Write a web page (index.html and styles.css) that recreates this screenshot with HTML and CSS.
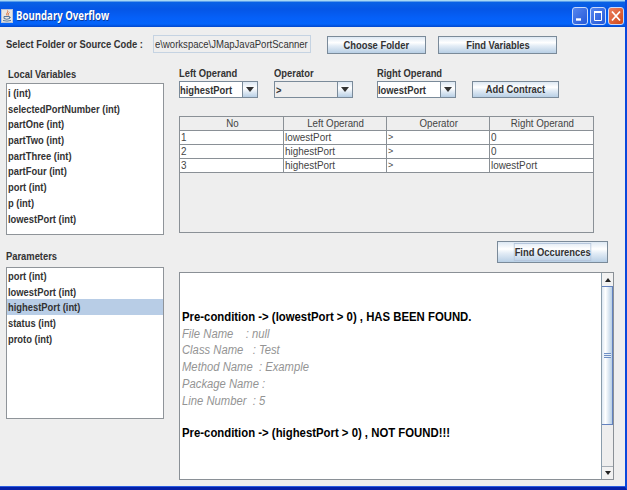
FILE: index.html
```html
<!DOCTYPE html>
<html lang="en">
<head>
    <meta charset="UTF-8">
    <title>Boundary Overflow</title>
    <link rel="stylesheet" href="styles.css">
</head>
<body>
    <div class="window">
        <div class="titlebar">
            <svg class="app-icon" width="12" height="14" viewBox="0 0 12 14">
                <rect x="0.5" y="0.5" width="11" height="13" fill="#e9e6e1" stroke="#b9c3d8"/>
                <path d="M6.5 1.5C8 3 4.5 4.5 6 6.5M8.5 3.5C7 4.5 7 5.5 7.5 6.5" fill="none" stroke="#d9703a"/>
                <path d="M3 7.5h5.5v2q-2.7 1.5-5.5 0zM8.5 8q2 0 0 1.5M2 11.5q4 1.2 8 0" fill="none" stroke="#56789d"/>
            </svg>
            <h1><span class="t">Boundary Overflow</span></h1>
            <div class="window-btns">
                <span class="win-btn"><svg width="14" height="16" viewBox="0 0 14 16"><path d="M3 11.5h5" stroke="#fff" stroke-width="2.4"/></svg></span>
                <span class="win-btn"><svg width="14" height="16" viewBox="0 0 14 16"><path d="M3.5 4h7v8.5h-7z" fill="none" stroke="#fff"/><path d="M3 4h8" stroke="#fff" stroke-width="2"/></svg></span>
                <span class="win-btn close"><svg width="14" height="16" viewBox="0 0 14 16"><path d="M3 3.5l8 9M11 3.5l-8 9" stroke="#fff" stroke-width="1.8"/></svg></span>
            </div>
        </div>

        <div class="source-row">
            <label><span class="t">Select Folder or Source Code :</span></label>
            <div class="path-field"><span class="t">e\workspace\JMapJavaPortScanner</span></div>
            <button class="btn choose-btn"><span class="t">Choose Folder</span></button>
            <button class="btn find-vars-btn"><span class="t">Find Variables</span></button>
        </div>

        <div class="main">
            <div class="sidebar">
                <h2 class="vars-title"><span class="t">Local Variables</span></h2>
                <ul class="list vars-list">
                    <li><span class="t">i (int)</span></li>
                    <li><span class="t">selectedPortNumber (int)</span></li>
                    <li><span class="t">partOne (int)</span></li>
                    <li><span class="t">partTwo (int)</span></li>
                    <li><span class="t">partThree (int)</span></li>
                    <li><span class="t">partFour (int)</span></li>
                    <li><span class="t">port (int)</span></li>
                    <li><span class="t">p (int)</span></li>
                    <li><span class="t">lowestPort (int)</span></li>
                </ul>
                <h2 class="params-title"><span class="t">Parameters</span></h2>
                <ul class="list">
                    <li><span class="t">port (int)</span></li>
                    <li><span class="t">lowestPort (int)</span></li>
                    <li class="selected"><span class="t">highestPort (int)</span></li>
                    <li><span class="t">status (int)</span></li>
                    <li><span class="t">proto (int)</span></li>
                </ul>
            </div>

            <div class="content">
                <div class="contract-row">
                    <div class="field left-field">
                        <label><span class="t">Left Operand</span></label>
                        <div class="combo"><div class="value"><span class="t">highestPort</span></div><i><svg width="8" height="5" viewBox="0 0 8 5"><path d="M0 0h8L4 5z" fill="#333"/></svg></i></div>
                    </div>
                    <div class="field operator-field">
                        <label><span class="t">Operator</span></label>
                        <div class="combo readonly"><div class="value"><span class="t">&gt;</span></div><i><svg width="8" height="5" viewBox="0 0 8 5"><path d="M0 0h8L4 5z" fill="#333"/></svg></i></div>
                    </div>
                    <div class="field right-field">
                        <label><span class="t">Right Operand</span></label>
                        <div class="combo"><div class="value"><span class="t">lowestPort</span></div><i><svg width="8" height="5" viewBox="0 0 8 5"><path d="M0 0h8L4 5z" fill="#333"/></svg></i></div>
                    </div>
                    <button class="btn add-btn"><span class="t">Add Contract</span></button>
                </div>

                <div class="table-pane">
                    <table>
                        <thead>
                            <tr>
                                <th class="no"><span class="t">No</span></th>
                                <th><span class="t">Left Operand</span></th>
                                <th><span class="t">Operator</span></th>
                                <th><span class="t">Right Operand</span></th>
                            </tr>
                        </thead>
                        <tbody>
                            <tr>
                                <td><span class="t">1</span></td>
                                <td><span class="t">lowestPort</span></td>
                                <td class="op">&gt;</td>
                                <td><span class="t">0</span></td>
                            </tr>
                            <tr>
                                <td><span class="t">2</span></td>
                                <td><span class="t">highestPort</span></td>
                                <td class="op">&gt;</td>
                                <td><span class="t">0</span></td>
                            </tr>
                            <tr>
                                <td><span class="t">3</span></td>
                                <td><span class="t">highestPort</span></td>
                                <td class="op">&gt;</td>
                                <td><span class="t">lowestPort</span></td>
                            </tr>
                        </tbody>
                    </table>
                </div>

                <button class="btn find-btn"><span class="t">Find Occurences</span></button>

                <div class="output">
                    <div class="output-text">
                        <p class="result">Pre-condition -&gt; (lowestPort &gt; 0) , HAS BEEN FOUND.</p>
                        <p>File Name    : null</p>
                        <p>Class Name   : Test</p>
                        <p>Method Name  : Example</p>
                        <p>Package Name :</p>
                        <p>Line Number  : 5</p>
                        <p class="result second">Pre-condition -&gt; (highestPort &gt; 0) , NOT FOUND!!!</p>
                    </div>
                    <div class="scrollbar">
                        <span class="arrow up"><svg width="6" height="4" viewBox="0 0 6 4"><path d="M0 4h6L3 0z" fill="#222"/></svg></span>
                        <span class="thumb"><i></i></span>
                        <span class="track"></span>
                        <span class="arrow down"><svg width="6" height="4" viewBox="0 0 6 4"><path d="M0 0h6L3 4z" fill="#222"/></svg></span>
                    </div>
                </div>
            </div>
        </div>
    </div>
</body>
</html>
```
FILE: styles.css
```css
* {
    box-sizing: border-box;
}

body {
    margin: 0;
    font-family: "Liberation Sans", Arial, sans-serif;
    font-size: 11.5px;
    font-weight: bold;
    color: #333;
}

h1, h2, p, ul {
    margin: 0;
    padding: 0;
}

/* condensed text */
.t {
    display: inline-block;
    white-space: nowrap;
    transform: scaleX(0.815);
    transform-origin: left center;
}

.window {
    width: 627px;
    height: 490px;
    background: #eee;
    border-right: 2px solid #0a48dc;
    border-bottom: 3px solid #0420a8;
    box-shadow: inset 0 -1px #2a5ce0;
    overflow: hidden;
}

.titlebar {
    display: flex;
    align-items: center;
    width: 627px;
    height: 27px;
    padding: 4px 3px 0 1px;
    background: linear-gradient(#a8d8f4 0, #a8d8f4 1px, #0a62e4 2px, #0556e6 9px, #0560f8 18px, #0464fa 24px, #0348cc 27px);
}

.titlebar h1 {
    flex: 1;
    margin-left: 3px;
    font-family: "Open Sans", sans-serif;
    font-size: 12px;
    line-height: 20px;
    color: #fff;
    text-shadow: 1px 1px #0a3a9c;
}

.titlebar h1 .t {
    transform: scaleX(0.8);
}

.window-btns {
    display: flex;
    gap: 2px;
}

.win-btn {
    width: 16px;
    height: 18px;
    border: 1px solid #c9dafa;
    border-radius: 3px;
    background: linear-gradient(135deg, #5686ee, #2458d8);
}

.win-btn svg {
    display: block;
}

.win-btn.close {
    background: linear-gradient(135deg, #ec8060, #d04818);
}

.btn {
    height: 18px;
    padding: 0;
    border: 1px solid #7a8a99;
    background: linear-gradient(#dde8f3 0, #fff 35%, #e4edf6 55%, #b8cfe5);
    font: inherit;
    line-height: 16px;
    color: #333;
}

.btn .t {
    transform-origin: center;
}

.source-row {
    display: flex;
    height: 26px;
    padding: 8px 0 0 6px;
}

.source-row label {
    width: 147px;
    line-height: 19px;
}

.path-field {
    width: 158px;
    height: 18px;
    padding-left: 1px;
    border: 1px solid #c5d3e2;
    font-weight: normal;
    line-height: 17px;
}

.path-field .t {
    transform: scaleX(0.83);
}

.choose-btn {
    width: 99px;
    margin: 1px 12px 0 16px;
}

.find-vars-btn {
    width: 119px;
    margin-top: 1px;
}

.main {
    display: flex;
    padding-top: 12px;
}

.sidebar {
    width: 158px;
    margin: 0 15px 0 6px;
}

.sidebar h2 {
    font-size: 11.5px;
    line-height: 18px;
}

.vars-title {
    padding-left: 2px;
}

.params-title {
    margin-top: 12px;
    padding-bottom: 2px;
}

.list {
    height: 152px;
    border: 1px solid #8f9499;
    background: #fff;
    list-style: none;
}

.vars-list {
    padding-top: 1px;
}

.list li {
    height: 15.7px;
    padding-left: 1px;
    line-height: 16.7px;
}

.list .selected {
    background: #b8cde6;
}

.content {
    width: 435px;
}

.contract-row {
    display: flex;
    align-items: flex-end;
    height: 33px;
}

.field {
    width: 79px;
}

.left-field {
    margin-right: 16px;
}

.operator-field {
    margin-right: 24px;
}

.right-field {
    margin-right: 16px;
}

.field label {
    display: block;
    line-height: 16px;
}

.combo {
    display: flex;
    height: 17px;
    border: 1px solid #7a8a99;
    background: #fff;
    line-height: 16px;
}

.combo .value {
    width: 62px;
}

.combo.readonly {
    background: #eee;
}

.combo.readonly .value {
    padding-left: 1px;
}

.combo i {
    display: flex;
    align-items: center;
    justify-content: center;
    width: 15px;
    border-left: 1px solid #7a8a99;
    background: linear-gradient(#dde8f3, #fff 40%, #b8cfe5);
}

.add-btn {
    width: 87px;
    height: 17px;
    line-height: 15px;
}

.table-pane {
    width: 415px;
    height: 117px;
    margin-top: 18px;
    border: 1px solid #8a9096;
}

table {
    width: 413px;
    table-layout: fixed;
    border-collapse: separate;
    border-spacing: 0;
    font-size: 11.5px;
    font-weight: normal;
    color: #444;
}

th, td {
    height: 14px;
    padding: 0 0 0 1px;
    border-right: 1px solid #8a9096;
    border-bottom: 1px solid #8a9096;
    line-height: 13px;
    text-align: left;
}

th:last-child, td:last-child {
    border-right: 0;
}

th {
    font-weight: normal;
    text-align: center;
}

th.no {
    width: 104px;
}

th .t {
    transform: scaleX(0.845);
    transform-origin: center;
}

td {
    background: #fff;
}

td .t {
    transform: scaleX(0.86);
}

td.op {
    font-size: 9px;
}

.find-btn {
    display: block;
    width: 111px;
    height: 22px;
    margin: 8px 0 9px 318px;
}

.find-btn .t {
    border: 1px solid #b5c6dc;
}

.output {
    display: flex;
    width: 435px;
    height: 208px;
    border: 1px solid #8a9096;
    background: #fff;
}

.output-text {
    width: 421px;
    padding: 36px 0 0 2px;
    font-size: 12.5px;
    font-weight: normal;
    line-height: 16.7px;
    color: #949494;
}

.output-text p {
    font-style: italic;
    white-space: pre;
    transform: scaleX(0.9);
    transform-origin: left center;
}

.output-text .result {
    font-weight: bold;
    font-style: normal;
    color: #000;
    transform: scaleX(0.908);
}

.output-text .second {
    margin-top: 16px;
}

.scrollbar {
    display: flex;
    flex-direction: column;
    width: 12px;
    border-left: 1px solid #8a9dac;
    background: #eee;
}

.arrow {
    display: flex;
    align-items: center;
    justify-content: center;
    height: 13px;
    background: #f2f2f2;
}

.down {
    border-top: 1px solid #a5adb5;
}

.thumb {
    display: flex;
    align-items: center;
    justify-content: center;
    height: 139px;
    border: 1px solid #6382bf;
    border-width: 1px 1px 1px 0;
    background: linear-gradient(90deg, #dde8f3, #fff 35%, #b8cfe5);
}

.thumb i {
    width: 7px;
    height: 5px;
    background: repeating-linear-gradient(#6f8fc4 0, #6f8fc4 1px, #e8f0f8 1px, #e8f0f8 2px);
}

.track {
    flex: 1;
}
```
